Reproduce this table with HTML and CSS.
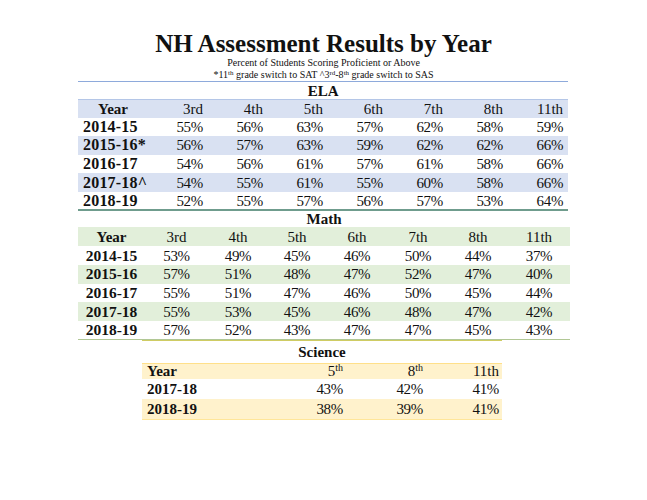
FILE: index.html
```html
<!DOCTYPE html>
<html>
<head>
<meta charset="utf-8">
<link rel="stylesheet" href="styles.css">
</head>
<body>
<div class="page">
  <header class="head">
    <h1 class="title">NH Assessment Results by Year</h1>
    <p class="sub">Percent of Students Scoring Proficient or Above</p>
    <p class="sub">*11<sup>th</sup> grade switch to SAT ^3<sup>rd</sup>-8<sup>th</sup> grade switch to SAS</p>
  </header>

  <table class="tbl ela">
    <colgroup><col class="c-year"><col><col><col><col><col><col><col></colgroup>
    <tr class="ttl"><th colspan="8">ELA</th></tr>
    <tr class="hdr"><th class="yr">Year</th><th>3rd</th><th>4th</th><th>5th</th><th>6th</th><th>7th</th><th>8th</th><th>11th</th></tr>
    <tr><th class="y">2014-15</th><td>55%</td><td>56%</td><td>63%</td><td>57%</td><td>62%</td><td>58%</td><td>59%</td></tr>
    <tr class="band"><th class="y">2015-16*</th><td>56%</td><td>57%</td><td>63%</td><td>59%</td><td>62%</td><td>62%</td><td>66%</td></tr>
    <tr><th class="y">2016-17</th><td>54%</td><td>56%</td><td>61%</td><td>57%</td><td>61%</td><td>58%</td><td>66%</td></tr>
    <tr class="band"><th class="y">2017-18^</th><td>54%</td><td>55%</td><td>61%</td><td>55%</td><td>60%</td><td>58%</td><td>66%</td></tr>
    <tr class="last"><th class="y">2018-19</th><td>52%</td><td>55%</td><td>57%</td><td>56%</td><td>57%</td><td>53%</td><td>64%</td></tr>
  </table>

  <table class="tbl math">
    <colgroup><col class="m0"><col class="m1"><col class="m2"><col class="m3"><col class="m4"><col class="m5"><col class="m6"><col class="m7"></colgroup>
    <tr class="ttl"><th colspan="8">Math</th></tr>
    <tr class="hdr"><th class="yr">Year</th><th>3rd</th><th>4th</th><th>5th</th><th>6th</th><th>7th</th><th>8th</th><th>11th</th></tr>
    <tr><th class="y">2014-15</th><td>53%</td><td>49%</td><td>45%</td><td>46%</td><td>50%</td><td>44%</td><td>37%</td></tr>
    <tr class="band"><th class="y">2015-16</th><td>57%</td><td>51%</td><td>48%</td><td>47%</td><td>52%</td><td>47%</td><td>40%</td></tr>
    <tr><th class="y">2016-17</th><td>55%</td><td>51%</td><td>47%</td><td>46%</td><td>50%</td><td>45%</td><td>44%</td></tr>
    <tr class="band"><th class="y">2017-18</th><td>55%</td><td>53%</td><td>45%</td><td>46%</td><td>48%</td><td>47%</td><td>42%</td></tr>
    <tr class="last"><th class="y">2018-19</th><td>57%</td><td>52%</td><td>43%</td><td>47%</td><td>47%</td><td>45%</td><td>43%</td></tr>
  </table>

  <table class="tbl sci">
    <colgroup><col class="s0"><col class="s1"><col class="s2"><col class="s3"></colgroup>
    <tr class="ttl"><th colspan="4">Science</th></tr>
    <tr class="hdr"><th class="yr">Year</th><th>5<sup>th</sup></th><th>8<sup>th</sup></th><th>11th</th></tr>
    <tr><th class="y">2017-18</th><td>43%</td><td>42%</td><td>41%</td></tr>
    <tr class="band last"><th class="y">2018-19</th><td>38%</td><td>39%</td><td>41%</td></tr>
  </table>
</div>
</body>
</html>
```

FILE: styles.css
```css
html, body {
  margin: 0;
  padding: 0;
  background: #ffffff;
}

.page {
  width: 647px;
  font-family: "Liberation Serif", "Times New Roman", serif;
  color: #111111;
}

.head {
  padding-top: 30px;
  text-align: center;
}

.title {
  margin: 0;
  font-size: 25px;
  line-height: 27px;
  font-weight: bold;
}

.sub {
  margin: 0;
  font-size: 10px;
  line-height: 12px;
}

.sub sup {
  font-size: 7px;
  line-height: 0;
  vertical-align: 3px;
}

.tbl {
  border-collapse: collapse;
  table-layout: fixed;
  font-size: 15px;
}

.tbl th,
.tbl td {
  padding: 0 5px;
  white-space: nowrap;
  line-height: 16px;
}

.tbl td {
  font-weight: normal;
  letter-spacing: -0.3px;
}

.tbl tr {
  height: 18.6px;
}

.tbl .ttl th {
  text-align: center;
  font-size: 15px;
  font-weight: bold;
}

.tbl .hdr th {
  font-weight: normal;
  font-size: 15px;
}

.tbl .hdr th.yr {
  font-weight: bold;
}

/* ELA */
.ela {
  margin-left: 78px;
  width: 490px;
  border-top: 1px solid #8eaadb;
}

.ela col { width: 60px; }
.ela col.c-year { width: 70px; }

.ela .ttl { height: 18px; }

.ela .hdr {
  height: 18px;
  background: #d9e1f2;
  border-top: 1px solid #b4c6e7;
}

.ela .hdr th { text-align: right; }
.ela .hdr th.yr { text-align: center; }

.ela th.y {
  text-align: left;
  font-size: 16px;
  font-weight: bold;
  letter-spacing: 0.2px;
}

.ela td { text-align: right; }

.ela .band { background: #d9e1f2; }

.ela .last { border-bottom: 2px solid #6f9c8d; }

/* Math */
.math {
  margin-left: 78px;
  width: 492px;
  border-bottom: 1px solid #b1c795;
}

.math col.m0 { width: 67px; }
.math col.m1 { width: 63px; }
.math col.m2 { width: 60px; }
.math col.m3 { width: 58px; }
.math col.m4 { width: 62px; }
.math col.m5 { width: 60px; }
.math col.m6 { width: 60px; }
.math col.m7 { width: 62px; }

.math .ttl { height: 16px; }

.math .ttl th { line-height: 14px; }

.math .hdr { height: 19px; background: #e2efda; }

.math th,
.math td { text-align: center; }

.math th.y {
  font-weight: bold;
  font-size: 15.5px;
}

.math .band { background: #e2efda; }

/* Science */
.sci {
  margin-left: 142px;
  width: 360px;
}

.sci col.s0 { width: 126px; }
.sci col.s1 { width: 80px; }
.sci col.s2 { width: 80px; }
.sci col.s3 { width: 74px; }

.sci .ttl {
  height: 23px;
  border-top: 1px solid #cfcc63;
}

.sci .ttl th { vertical-align: top; padding-top: 3px; }

.sci .hdr {
  height: 16px;
  background: #fff2cc;
  border-top: 1px solid #ffe08a;
}

.sci .hdr th { text-align: right; line-height: 15px; }

.sci .hdr th:last-child { padding-right: 3px; }

.sci .hdr th.yr { text-align: left; }

.sci .hdr sup {
  font-size: 10px;
  line-height: 0;
  vertical-align: 5px;
}

.sci tr { height: 20px; }

.sci th.y {
  text-align: left;
  font-weight: bold;
}

.sci td { text-align: right; }

.sci td:last-child { padding-right: 3px; }

.sci .band { background: #fff2cc; }

.sci .last { border-bottom: 1px solid #ffe699; }
```
